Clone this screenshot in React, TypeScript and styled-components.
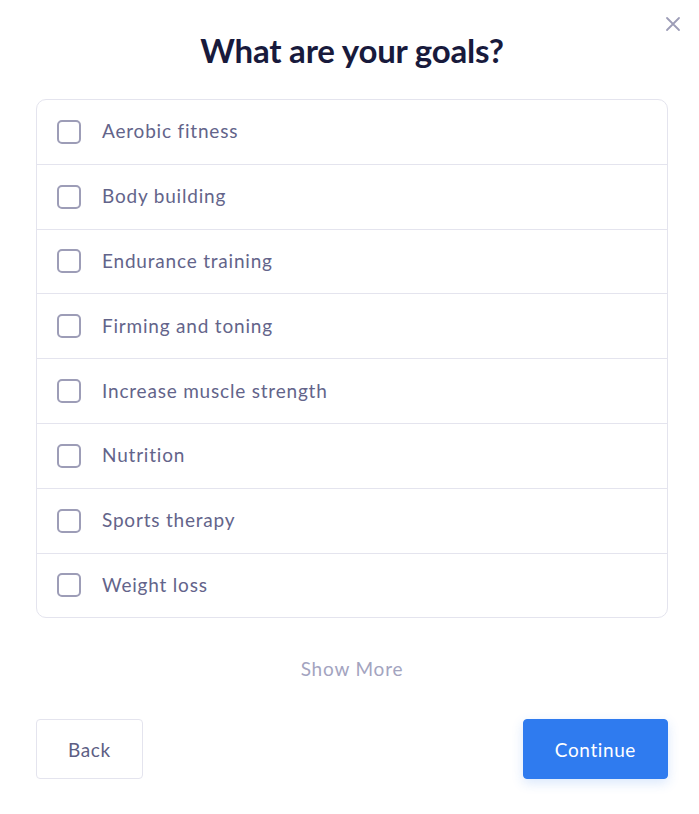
import React from "react"
import styled, { createGlobalStyle } from "styled-components"

const GlobalStyle = createGlobalStyle`
  html, body { margin: 0; padding: 0; background: #fff; }
  body { font-family: Lato, "Open Sans", sans-serif; }
`

const Modal = styled.div`
  position: relative;
  width: 699px;
  height: 814px;
  box-sizing: border-box;
  padding: 27px 31px 0 36px;
  background: #fff;
`

const Close = styled.button`
  position: absolute;
  top: 16px;
  right: 18px;
  width: 16px;
  height: 16px;
  padding: 0;
  border: none;
  background: none;
  cursor: pointer;
`

const Title = styled.h1`
  margin: 0 0 26px;
  text-align: center;
  font-size: 33px;
  font-weight: 700;
  line-height: 46px;
  color: #181a3c;
  letter-spacing: -0.2px;
`

const List = styled.ul`
  list-style: none;
  margin: 0;
  padding: 0;
  border: 1px solid #e4e4ee;
  border-radius: 10px;
`

const Row = styled.li`
  display: flex;
  align-items: center;
  height: 63.8px;
  padding: 0 20px;
  border-top: 1px solid #e4e4ee;
  &:first-child { border-top: none; }
`

const Box = styled.span`
  width: 24px;
  height: 24px;
  box-sizing: border-box;
  border: 2px solid #9d9db7;
  border-radius: 5px;
  margin-right: 21px;
  flex-shrink: 0;
`

const Label = styled.span`
  font-size: 19px;
  color: #63648a;
  letter-spacing: 0.8px;
  margin-top: -2px;
`

const More = styled.div`
  margin-top: 38px;
  text-align: center;
  font-size: 19px;
  color: #a3a4bf;
  line-height: 26px;
  letter-spacing: 0.8px;
`

const Footer = styled.div`
  display: flex;
  justify-content: space-between;
  margin-top: 37px;
`

const Btn = styled.button<{ $primary?: boolean }>`
  height: 60px;
  padding: 0 31px;
  font-family: inherit;
  font-size: 19px;
  letter-spacing: 0.6px;
  border-radius: 4px;
  cursor: pointer;
  border: 1px solid ${p => (p.$primary ? "#2f7bef" : "#e4e4ee")};
  background: ${p => (p.$primary ? "#2f7bef" : "#fff")};
  color: ${p => (p.$primary ? "#fff" : "#5d5e84")};
  box-shadow: ${p => (p.$primary ? "0 4px 12px rgba(47,123,239,0.18)" : "none")};
`

const goals = [
  "Aerobic fitness",
  "Body building",
  "Endurance training",
  "Firming and toning",
  "Increase muscle strength",
  "Nutrition",
  "Sports therapy",
  "Weight loss",
]

export default function App() {
  return (
    <>
      <GlobalStyle />
      <Modal>
        <Close aria-label="close">
          <svg width="16" height="16" viewBox="0 0 16 16">
            <path d="M2 2L14 14M14 2L2 14" stroke="#9d9db7" strokeWidth="1.8" strokeLinecap="round" />
          </svg>
        </Close>
        <Title>What are your goals?</Title>
        <List>
          {goals.map(g => (
            <Row key={g}>
              <Box />
              <Label>{g}</Label>
            </Row>
          ))}
        </List>
        <More>Show More</More>
        <Footer>
          <Btn>Back</Btn>
          <Btn $primary>Continue</Btn>
        </Footer>
      </Modal>
    </>
  )
}
